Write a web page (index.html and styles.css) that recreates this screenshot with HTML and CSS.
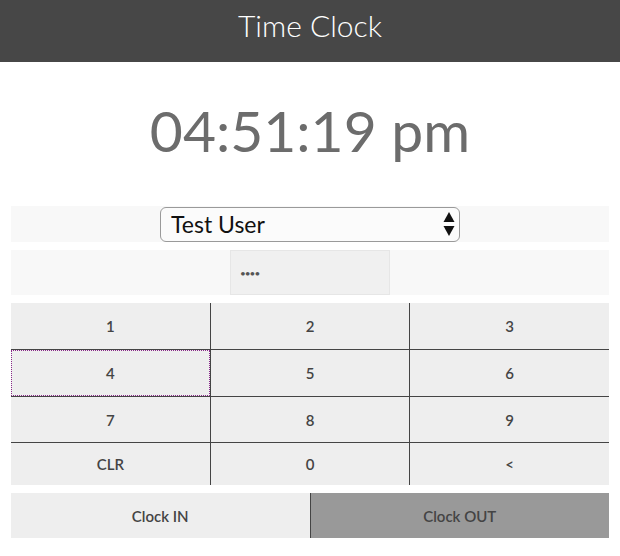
FILE: index.html
```html
<!DOCTYPE html>
<html lang="en">
<head>
<meta charset="utf-8">
<title>Time Clock</title>
<link rel="stylesheet" href="styles.css">
</head>
<body>
<header class="topbar"><h1 class="title">Time Clock</h1></header>
<div class="clock">04:51:19 pm</div>
<main class="panel">
  <div class="row user-row">
    <div class="select">
      <span class="select-text">Test User</span>
      <svg class="select-arrows" width="12" height="26" viewBox="0 0 12 26"><path d="M6 1 L11.5 11 L0.5 11 Z" fill="#111"/><path d="M0.5 15 L11.5 15 L6 25 Z" fill="#111"/></svg>
    </div>
  </div>
  <div class="row pin-row">
    <div class="pin"><span class="pin-dots">••••</span></div>
  </div>
  <div class="keypad">
    <button class="key">1</button>
    <button class="key">2</button>
    <button class="key">3</button>
    <button class="key focused">4</button>
    <button class="key">5</button>
    <button class="key">6</button>
    <button class="key">7</button>
    <button class="key">8</button>
    <button class="key">9</button>
    <button class="key">CLR</button>
    <button class="key">0</button>
    <button class="key">&lt;</button>
  </div>
  <div class="actions">
    <button class="action in">Clock IN</button>
    <button class="action out">Clock OUT</button>
  </div>
</main>
</body>
</html>
```

FILE: styles.css
```css
* { box-sizing: border-box; }
html, body { margin: 0; padding: 0; background: #ffffff; }
body { font-family: Lato, "Open Sans", sans-serif; color: #444; }

.topbar {
  height: 62px;
  background: #474747;
  display: flex;
  justify-content: center;
  align-items: flex-start;
}
.title {
  margin: 0;
  padding-top: 7px;
  font-size: 30px;
  line-height: 36px;
  font-weight: 300;
  color: #ffffff;
}

.clock {
  height: 144px;
  display: flex;
  justify-content: center;
  align-items: center;
  padding-bottom: 8px;
  font-size: 57px;
  font-weight: 400;
  color: #6c6c6c;
}

.panel {
  padding: 0 11px;
  display: flex;
  flex-direction: column;
  gap: 8px;
}

.row {
  background: #f8f8f8;
  display: flex;
  justify-content: center;
  align-items: center;
}
.user-row { height: 36px; }
.select {
  width: 300px;
  height: 35px;
  border: 1px solid #9a9a9a;
  border-radius: 6px;
  background: #fbfbfb;
  display: flex;
  align-items: center;
  justify-content: space-between;
  padding: 0 4px 0 10px;
}
.select-text { font-size: 23px; color: #111; }
.select-arrows { display: block; }

.pin-row { height: 45px; }
.pin {
  width: 160px;
  height: 45px;
  background: #f0f0f0;
  border: 1px solid #e6e6e6;
  display: flex;
  align-items: center;
  padding-left: 9px;
}
.pin-dots { font-size: 10px; letter-spacing: -1px; color: #555; }

.keypad {
  display: grid;
  grid-template-columns: repeat(3, 1fr);
  grid-template-rows: 46px 46px 45px 42px;
  gap: 1px;
  background: #444;
}
.key, .action {
  border: 0;
  margin: 0;
  font-family: Lato, "Open Sans", sans-serif;
  font-size: 15px;
  font-weight: 600;
  color: #444;
  background: #eeeeee;
  padding: 0;
}
.key.focused { outline: 1px dotted #8a2a8a; outline-offset: -1px; }

.actions {
  display: flex;
  height: 45px;
}
.action { flex: 1; }
.action.out {
  background: #999999;
  border-left: 1px solid #444;
  color: #444;
}
```
